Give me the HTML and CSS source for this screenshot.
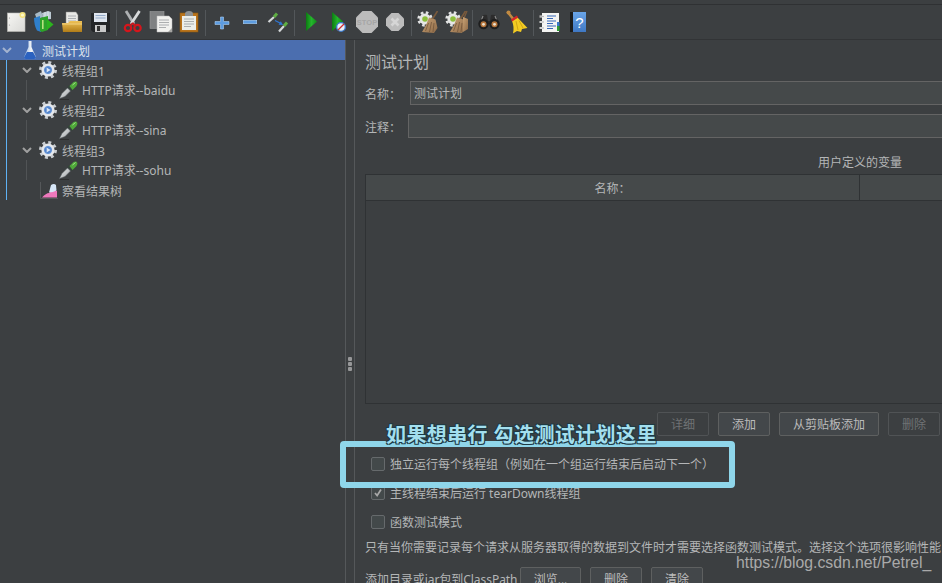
FILE: index.html
```html
<!DOCTYPE html>
<html lang="zh">
<head>
<meta charset="utf-8">
<title>JMeter</title>
<link rel="stylesheet" href="styles.css">
</head>
<body>
<svg class="defs" width="0" height="0" aria-hidden="true">
  <defs>
    <linearGradient id="gPage" x1="0" y1="0" x2="1" y2="1"><stop offset="0" stop-color="#f7f7f4"/><stop offset="1" stop-color="#d9d9d6"/></linearGradient>
    <linearGradient id="gFolder" x1="0" y1="0" x2="0" y2="1"><stop offset="0" stop-color="#efc257"/><stop offset="1" stop-color="#b07c18"/></linearGradient>
    <linearGradient id="gGreen" x1="0" y1="0" x2="1" y2="0"><stop offset="0" stop-color="#0c7a12"/><stop offset=".5" stop-color="#24b52c"/><stop offset="1" stop-color="#0f8c18"/></linearGradient>
    <linearGradient id="gBroom" x1="0" y1="0" x2="1" y2="1"><stop offset="0" stop-color="#c9a274"/><stop offset="1" stop-color="#8d6a48"/></linearGradient>
    <linearGradient id="gBlue" x1="0" y1="0" x2="0" y2="1"><stop offset="0" stop-color="#6aa5e8"/><stop offset="1" stop-color="#3f78c4"/></linearGradient>
    <linearGradient id="gFlask" x1="0" y1="0" x2="1" y2="0"><stop offset="0" stop-color="#8fb0dc"/><stop offset=".6" stop-color="#f2f5f8"/><stop offset="1" stop-color="#b9c8dc"/></linearGradient>
    <linearGradient id="gBody" x1="0" y1="0" x2="1" y2="1"><stop offset="0" stop-color="#eceeef"/><stop offset="1" stop-color="#9da2a5"/></linearGradient>
    <radialGradient id="gGear" cx=".5" cy=".5" r=".5"><stop offset="0" stop-color="#2f62b5"/><stop offset=".75" stop-color="#5d8ed2"/><stop offset="1" stop-color="#dfe6f0"/></radialGradient>
    <symbol id="dropper" viewBox="0 0 19 19">
      <path d="M0.5 17.5 L3 12.5 L8.5 7 L11.5 10 L6 15.5 Z" fill="url(#gBody)" stroke="#5f6468" stroke-width=".5"/>
      <path d="M8.5 6 L12.5 10 L14.5 8 L10.5 4 Z" fill="#34453a"/>
      <path d="M10.5 5 L14.5 1 Q17.5 -0.3 18.4 2 Q18.5 4 17.3 5.2 L13.5 9 Z" fill="#4fa83a"/>
      <path d="M13.5 4 L16.5 1.5" stroke="#a5e58a" stroke-width="1"/>
      <path d="M1 18.5 H10" stroke="#2d2f30" stroke-width="1"/>
    </symbol>
    <symbol id="gear" viewBox="0 0 18 18">
      <circle cx="9" cy="9" r="7.6" fill="none" stroke="#c9cdd1" stroke-width="2.8" stroke-dasharray="3 2.97"/>
      <circle cx="9" cy="9" r="6.6" fill="#e6e8eb"/>
      <circle cx="9" cy="9" r="4.6" fill="url(#gGear)"/>
      <path d="M7.6 6.6 L11.6 9 L7.6 11.4 Z" fill="#d9e6f7"/>
    </symbol>
    <symbol id="gearbroom" viewBox="0 0 21 22">
      <circle cx="8" cy="8" r="6.4" fill="none" stroke="#e2e3e3" stroke-width="2.6" stroke-dasharray="2.6 2.43"/>
      <circle cx="8" cy="8" r="5.6" fill="#e6e7e6"/>
      <circle cx="8" cy="8" r="2.8" fill="#8cbe3c"/>
      <path d="M20.5 0 L15.5 8" stroke="#7a5a3c" stroke-width="1.6"/>
      <path d="M12 6.5 L18.5 8.5 L20.5 17 L17 22 L5 21 L9 14 Z" fill="url(#gBroom)"/>
      <path d="M11.5 12 L8.5 20 M14.5 11 L12.5 21 M17 12 L16 21" stroke="#6d5036" stroke-width=".7"/>
    </symbol>
  </defs>
</svg>

<header class="toolbar">
  <span class="tool"><svg class="ti" viewBox="0 0 28 34"><rect x="5.5" y="8" width="17.5" height="18.5" fill="url(#gPage)" stroke="#bdbdb8" stroke-width=".6"/><circle cx="7.5" cy="13" r=".6" fill="#999"/><circle cx="7.5" cy="20" r=".6" fill="#999"/><circle cx="20.5" cy="10" r="3" fill="#f4e27a"/><circle cx="20.5" cy="10" r="1.6" fill="#fff8c8"/></svg></span>
  <span class="tool"><svg class="ti" viewBox="0 0 28 34"><path d="M5 9 L11 6 L13 12 L7 15 Z" fill="#a7b9c5"/><path d="M12 8 L18 6 L21 7 L21 14 L13 15 Z" fill="#bccad3"/><path d="M15 7 V13 M18 6.5 V13" stroke="#e6edf2" stroke-width=".8"/><path d="M4 13 L10 11 L11 27 L7 25.5 Q4 20 4 13 Z" fill="#2f7fca"/><path d="M10 13 L18 11 L18 25 L12 27 L10 26 Z" fill="#2ea22a"/><path d="M17 14 L23.5 19.5 L17 25 Z" fill="#2cb31e"/><rect x="12" y="15" width="1.6" height="9" fill="#b6e27d"/></svg></span>
  <span class="tool"><svg class="ti" viewBox="0 0 28 34"><path d="M8 7 H18 L20 10 V19 H8 Z" fill="#e9e9e6" stroke="#8a8a86" stroke-width=".5"/><path d="M10 11 H18 M10 13.5 H18 M10 16 H18" stroke="#9aa0a5" stroke-width=".8"/><path d="M4 18 H10 L12 16 H24 L24 27 H5 Z" fill="url(#gFolder)"/><path d="M4 19 H24" stroke="#f8dc8e" stroke-width=".8"/></svg></span>
  <span class="tool"><svg class="ti" viewBox="0 0 28 34"><path d="M5 8 H24 V27 H7 L5 25 Z" fill="#232527"/><rect x="8" y="8" width="13" height="9" fill="#dfe5ee"/><path d="M9.5 10.5 H19.5 M9.5 13 H19.5" stroke="#8aa3c4" stroke-width=".9"/><rect x="9" y="20" width="11" height="7" fill="#c9c9c9"/><rect x="11" y="21" width="3" height="5" fill="#333"/></svg></span>
  <span class="sep"></span>
  <span class="tool"><svg class="ti" viewBox="0 0 28 34"><path d="M7 6 L15 19" stroke="#aeb1b3" stroke-width="2.8"/><path d="M20.5 6 L12 19" stroke="#d9dbdc" stroke-width="2.8"/><circle cx="9" cy="23" r="3.2" fill="none" stroke="#d5161c" stroke-width="2.2"/><circle cx="18.5" cy="23" r="3.2" fill="none" stroke="#d5161c" stroke-width="2.2"/><path d="M14 18 L11 21 M13.5 18 L16.5 21" stroke="#c41a1e" stroke-width="2"/></svg></span>
  <span class="tool"><svg class="ti" viewBox="0 0 28 34"><rect x="3" y="6.5" width="14" height="17" fill="#7f8182" stroke="#9a9c9c" stroke-width=".6"/><path d="M10 11 H22 L25 14 V27 H10 Z" fill="#f1f1ee" stroke="#bbb" stroke-width=".5"/><path d="M12 15 H22 M12 17.5 H22 M12 20 H22 M12 22.5 H19" stroke="#9b9d9e" stroke-width=".8"/><path d="M21 27 L25 23 V27 Z" fill="#a5a5a2"/></svg></span>
  <span class="tool"><svg class="ti" viewBox="0 0 28 34"><rect x="5" y="8" width="18" height="19" fill="#b9741c" stroke="#8a5713" stroke-width=".6"/><rect x="7" y="11" width="14" height="14" fill="#eceee9"/><path d="M9 14 H19 M9 16.5 H19 M9 19 H19 M9 21.5 H16" stroke="#9b9d9e" stroke-width=".8"/><path d="M10 9 Q10 6 14 6 Q18 6 18 9 V11 H10 Z" fill="#8d9193"/></svg></span>
  <span class="sep"></span>
  <span class="tool"><svg class="ti" viewBox="0 0 28 34"><path d="M12.5 12 H15.5 V16.5 H21 V19.5 H15.5 V24 H12.5 V19.5 H7 V16.5 H12.5 Z" fill="#5d9ce0" stroke="#a7cdf2" stroke-width=".6"/></svg></span>
  <span class="tool"><svg class="ti" viewBox="0 0 28 34"><rect x="7.3" y="15.3" width="13.4" height="3.4" fill="#5d9ce0" stroke="#a7cdf2" stroke-width=".6"/></svg></span>
  <span class="tool"><svg class="ti" viewBox="0 0 28 34"><path d="M4.5 17 L10 12" stroke="#d5d8da" stroke-width="2.2"/><path d="M10 12 L13 8.5" stroke="#5fae43" stroke-width="3"/><path d="M15 26.5 L20 21" stroke="#d5d8da" stroke-width="2.2"/><path d="M20 21 L23 17.5" stroke="#5fae43" stroke-width="3"/><path d="M11 15.5 L16 18" stroke="#2e76d4" stroke-width="1.2"/><path d="M19 20 L14.5 19.8 L16.8 16.2 Z" fill="#2e76d4"/></svg></span>
  <span class="sep"></span>
  <span class="tool"><svg class="ti" viewBox="0 0 28 34"><path d="M9 7 L20 16.5 L9 26 Z" fill="url(#gGreen)"/></svg></span>
  <span class="tool"><svg class="ti" viewBox="0 0 28 34"><path d="M7 7 L18 16.5 L7 26 Z" fill="url(#gGreen)"/><circle cx="16" cy="22" r="4.4" fill="#e8f0fa" stroke="#3a78c8" stroke-width="1.4"/><path d="M13 25 L19 19" stroke="#d32b2b" stroke-width="1.3"/></svg></span>
  <span class="tool"><svg class="ti" viewBox="0 0 28 34"><path d="M9.5 6 H18.5 L25 12.5 V21.5 L18.5 28 H9.5 L3 21.5 V12.5 Z" fill="#bcbcbc"/><text x="14" y="20" class="stoptxt">STOP</text></svg></span>
  <span class="tool"><svg class="ti" viewBox="0 0 28 34"><path d="M10.5 8 H17.5 L23 13.5 V20.5 L17.5 26 H10.5 L5 20.5 V13.5 Z" fill="#bcbcbc"/><path d="M10.5 13.5 L17.5 20.5 M17.5 13.5 L10.5 20.5" stroke="#d6d6d6" stroke-width="2.6"/></svg></span>
  <span class="sep"></span>
  <span class="tool"><svg class="ti" viewBox="0 0 28 34"><use href="#gearbroom" x="3" y="6" width="21" height="22"/></svg></span>
  <span class="tool"><svg class="ti" viewBox="0 0 28 34"><use href="#gearbroom" x="3" y="6" width="21" height="22"/><path d="M25 6 L22 13" stroke="#7a5a3c" stroke-width="1.4"/><path d="M21 12 L26 14 L26 24 L21 27 Z" fill="url(#gBroom)"/></svg></span>
  <span class="sep"></span>
  <span class="tool"><svg class="ti" viewBox="0 0 28 34"><path d="M3.5 19 L7 11 Q9 9 12 10 L13 16 H15 L16 10 Q19 9 21 11 L24.5 19 Z" fill="#2c2c2c"/><path d="M8 11 L6 16 M20 11 L22 16" stroke="#8a8a8a" stroke-width="1.2"/><circle cx="8.5" cy="19" r="5.2" fill="#1e1e1e"/><circle cx="19.5" cy="19" r="5.2" fill="#1e1e1e"/><circle cx="8.5" cy="19.3" r="3" fill="#b5743a"/><circle cx="19.5" cy="19.3" r="3" fill="#b5743a"/><circle cx="8.5" cy="19.3" r="1.4" fill="#e9e2d2"/><circle cx="19.5" cy="19.3" r="1.4" fill="#e9e2d2"/></svg></span>
  <span class="tool"><svg class="ti" viewBox="0 0 28 34"><path d="M5 7.5 L11 15" stroke="#c08a42" stroke-width="2.6" stroke-linecap="round"/><circle cx="5.5" cy="7.5" r="2" fill="#c08a42"/><path d="M9 16 L14.5 12.5 L24.5 23 L19 24 L18 27 L14 26 L10 28.5 Q11.5 22 9 16 Z" fill="#f3cb22"/><path d="M8.5 15.5 L14.5 11.5" stroke="#d5282a" stroke-width="2.2"/><path d="M13 16 L15 25 M16 15.5 L20 23" stroke="#c79a12" stroke-width=".8"/></svg></span>
  <span class="sep"></span>
  <span class="tool"><svg class="ti" viewBox="0 0 28 34"><rect x="6" y="8" width="17" height="19" fill="#f4f4f2"/><path d="M3.5 11.5 H8 M3.5 17 H8 M3.5 23 H8" stroke="#e8e8e8" stroke-width="2"/><path d="M3.5 11.5 H8 M3.5 17 H8 M3.5 23 H8" stroke="#333" stroke-width=".5" stroke-dasharray="1 1"/><path d="M11 11 H20 M11 13.5 H17 M11 16 H20 M11 18.5 H17 M11 21 H20 M11 23.5 H17" stroke="#3868b8" stroke-width="1"/><rect x="21" y="17" width="2.5" height="4" fill="#3a78c8"/><rect x="21" y="21" width="2.5" height="5" fill="#2f9a35"/></svg></span>
  <span class="tool"><svg class="ti" viewBox="0 0 28 34"><rect x="6" y="7" width="4" height="20" fill="#1c1c1c"/><rect x="9" y="7" width="13" height="20" fill="url(#gBlue)"/><text x="15.5" y="23" class="qtxt">?</text></svg></span>
</header>

<main class="main">
  <nav class="tree">
    <div class="row selected">
      <svg class="chev" viewBox="0 0 10 6"><path d="M1 1 L5 5 L9 1" /></svg>
      <svg class="ic-plan" viewBox="0 0 18 18"><path d="M7.5 0 H10.5 V6 L15 16 Q15 18 13 18 H5 Q3 18 3 16 L7.5 6 Z" fill="url(#gFlask)"/><path d="M6 11 H12 L15 16.5 Q15 18 13 18 H5 Q3 18 3 16.5 Z" fill="#2b62c0"/></svg>
      <span>测试计划</span>
    </div>
    <div class="plan-body">
      <div class="row group"><svg class="chev chev-g" viewBox="0 0 10 6"><path d="M1 1 L5 5 L9 1" /></svg><svg class="ic-gear"><use href="#gear"/></svg><span>线程组1</span></div>
      <div class="children"><div class="row sampler"><svg class="ic-drop"><use href="#dropper"/></svg><span>HTTP请求--baidu</span></div></div>
      <div class="row group"><svg class="chev chev-g" viewBox="0 0 10 6"><path d="M1 1 L5 5 L9 1" /></svg><svg class="ic-gear"><use href="#gear"/></svg><span>线程组2</span></div>
      <div class="children"><div class="row sampler"><svg class="ic-drop"><use href="#dropper"/></svg><span>HTTP请求--sina</span></div></div>
      <div class="row group"><svg class="chev chev-g" viewBox="0 0 10 6"><path d="M1 1 L5 5 L9 1" /></svg><svg class="ic-gear"><use href="#gear"/></svg><span>线程组3</span></div>
      <div class="children"><div class="row sampler"><svg class="ic-drop"><use href="#dropper"/></svg><span>HTTP请求--sohu</span></div></div>
      <div class="row listener">
        <svg class="ic-chart" viewBox="0 0 18 18"><path d="M0.5 1 V17.5 H18" fill="none" stroke="#55585a" stroke-width="1"/><path d="M2 16.5 Q6 12 9 12 L13 9 L17 10 V16.5 Z" fill="#ee78bc"/><path d="M9 11.5 L11 4 Q14 2 16 4 L16.5 9.5 Q13 11.5 9 11.5 Z" fill="#d6e6f7"/></svg>
        <span>察看结果树</span>
      </div>
    </div>
  </nav>

  <div class="splitter"><i></i><i></i><i></i></div>

  <section class="form">
    <h1 class="title">测试计划</h1>
    <div class="field"><label class="lab lab-name">名称：</label><div class="input">测试计划</div></div>
    <div class="field"><label class="lab lab-note">注释：</label><div class="input"></div></div>
    <div class="legend">用户定义的变量</div>
    <div class="table">
      <div class="thead"><div class="th th-name">名称：</div><div class="th th-val"></div></div>
      <div class="tbody"></div>
    </div>
    <div class="btn-row">
      <button class="btn w52" disabled>详细</button>
      <button class="btn w52">添加</button>
      <button class="btn w100">从剪贴板添加</button>
      <button class="btn w52" disabled>删除</button>
    </div>
    <div class="checks">
      <div class="check"><span class="box"></span><span>独立运行每个线程组（例如在一个组运行结束后启动下一个）</span></div>
      <div class="check"><span class="box"><svg viewBox="0 0 14 14"><path d="M3.5 7 L6 10 L10.5 3" fill="none" stroke="#a8a8a8" stroke-width="2"/></svg></span><span>主线程结束后运行 tearDown线程组</span></div>
      <div class="check"><span class="box"></span><span>函数测试模式</span></div>
    </div>
    <p class="desc">只有当你需要记录每个请求从服务器取得的数据到文件时才需要选择函数测试模式。选择这个选项很影响性能</p>
    <div class="cp-row">
      <span class="cp-label">添加目录或jar包到ClassPath</span>
      <button class="btn w61">浏览...</button>
      <button class="btn w52">删除</button>
      <button class="btn w52">清除</button>
    </div>
  </section>
</main>

<div class="callout"></div>
<div class="callout-text">如果想串行 勾选测试计划这里</div>
<div class="watermark">https://blog.csdn.net/Petrel_</div>
</body>
</html>
```
FILE: styles.css
```css
* { box-sizing: border-box; }
html, body { margin: 0; padding: 0; }
body {
  position: relative;
  width: 942px;
  height: 583px;
  overflow: hidden;
  background: #3c3f41;
  color: #b4b6b7;
  font-family: "Noto Sans", "Noto Sans CJK SC", sans-serif;
  font-size: 12px;
}
.defs { display: block; width: 0; height: 0; overflow: hidden; }

.toolbar {
  display: flex;
  height: 40px;
  padding: 5px 0 1px 2px;
  background: #3c3f41;
  border-bottom: 1px solid #323436;
  box-shadow: inset 0 4px 0 #3c3f41, inset 0 5px 0 #2f3133;
}
.tool { flex: 0 0 28px; width: 28px; height: 34px; }
.ti { display: block; width: 28px; height: 34px; }
.sep { flex: 0 0 5px; width: 5px; height: 26px; margin-top: 5px; padding-left: 2px; }
.sep::before { content: ""; display: block; width: 1px; height: 100%; background: #53575a; }
.stoptxt { font: bold 7.5px "Liberation Sans", sans-serif; fill: #a6a6a6; text-anchor: middle; }
.qtxt { font: 15px "Liberation Sans", sans-serif; fill: #fff; text-anchor: middle; }

.main { display: flex; height: 543px; overflow: hidden; }
.tree { flex: 0 0 345px; width: 345px; color: #b4b6b7; }
.row { display: flex; align-items: center; height: 20px; white-space: nowrap; }
.row span { padding-top: 2px; }
.sampler span { padding-top: 0; }
.selected { padding-left: 2px; background: #4b6eaf; color: #dde3ec; }
.chev { width: 10px; height: 6px; flex: none; }
.chev path { fill: none; stroke: #a0a0a0; stroke-width: 2; }
.selected .chev { margin-right: 9px; }
.selected .chev path { stroke: #a3b3cf; }
.ic-plan { width: 18px; height: 18px; flex: none; margin-right: 3px; }
.plan-body { margin-left: 6px; border-left: 1px solid #5fb2f5; }
.group { padding-left: 15px; }
.chev-g { margin-right: 7px; }
.ic-gear { width: 18px; height: 18px; flex: none; margin-right: 5px; }
.children { margin-left: 19px; border-left: 1px solid #515456; }
.sampler { padding-left: 32px; }
.ic-drop { width: 19px; height: 19px; flex: none; margin-right: 4px; }
.listener { padding-left: 33px; }
.ic-chart { width: 18px; height: 18px; flex: none; margin-right: 4px; }

.splitter {
  flex: 0 0 10px;
  width: 10px;
  display: flex;
  flex-direction: column;
  align-items: center;
  justify-content: center;
  gap: 1px;
  padding-top: 104px;
  border-left: 1px solid #55585a;
  border-right: 1px solid #55585a;
}
.splitter i { display: block; width: 4px; height: 4px; background: #979899; border-radius: 1px; }

.form { flex: 0 0 1000px; width: 1000px; padding-left: 10px; }
.title { margin: 12px 0 0; height: 20px; font-size: 16px; line-height: 20px; font-weight: 400; color: #b4b6b7; }
.field { display: flex; align-items: center; height: 24px; margin-top: 9px; }
.lab { padding-top: 2px; }
.lab-name { width: 45px; flex: none; }
.lab-note { width: 43px; flex: none; }
.input {
  flex: 1;
  height: 24px;
  padding: 1px 3px 0;
  line-height: 22px;
  background: #45494a;
  border: 1px solid #646464;
  color: #b4b6b7;
}
.legend { width: 990px; height: 36px; padding-top: 13px; line-height: 23px; text-align: center; }
.table { width: 990px; height: 230px; border: 1px solid #2f3234; display: flex; flex-direction: column; }
.thead { display: flex; height: 26px; flex: none; background: #45494a; border-bottom: 1px solid #2f3234; }
.th { line-height: 28px; text-align: center; }
.th-name { flex: 0 0 494px; border-right: 1px solid #2f3234; }
.th-val { flex: 1; }
.tbody { flex: 1; background: #3c3f41; }

.btn {
  flex: none;
  height: 24px;
  padding: 0;
  background: #43474a;
  border: 1px solid #5e6060;
  border-radius: 2px;
  color: #bbbbbb;
  font: inherit;
}
.btn:disabled { background: #3c3f41; border-color: #505355; color: #6f7274; }
.w52 { width: 52px; }
.w61 { width: 61px; }
.w100 { width: 100px; }
.btn-row { display: flex; gap: 9px; margin: 8px 0 0 292px; }

.checks { margin-top: 13px; }
.check { display: flex; align-items: center; height: 29px; padding-left: 6px; white-space: nowrap; }
.box { width: 14px; height: 14px; flex: none; margin-right: 5px; background: #43494a; border: 1px solid #666a6c; border-radius: 2px; }
.box svg { display: block; width: 12px; height: 12px; }
.desc { margin: 4px 0 0; height: 16px; line-height: 16px; white-space: nowrap; }
.cp-row { display: flex; align-items: center; gap: 9px; margin-top: 11px; }
.cp-label { width: 146px; flex: none; white-space: nowrap; letter-spacing: -.05px; }

.callout {
  position: absolute;
  left: 340px;
  top: 441px;
  width: 395px;
  height: 47px;
  border: 6px solid #8fd6ea;
  border-radius: 4px;
}
.callout-text {
  position: absolute;
  left: 386px;
  top: 421px;
  height: 28px;
  line-height: 28px;
  font-size: 20px;
  font-weight: 700;
  letter-spacing: .4px;
  white-space: nowrap;
  color: #a3dfee;
  text-shadow: 1px 1px 0 #1d3a44, -1px -1px 0 #1d3a44, 1px -1px 0 #1d3a44, -1px 1px 0 #1d3a44;
}
.watermark {
  position: absolute;
  left: 736px;
  top: 554px;
  font-family: "Liberation Sans", sans-serif;
  font-size: 15.75px;
  line-height: 18px;
  color: #a9a9a9;
  white-space: nowrap;
}
```
